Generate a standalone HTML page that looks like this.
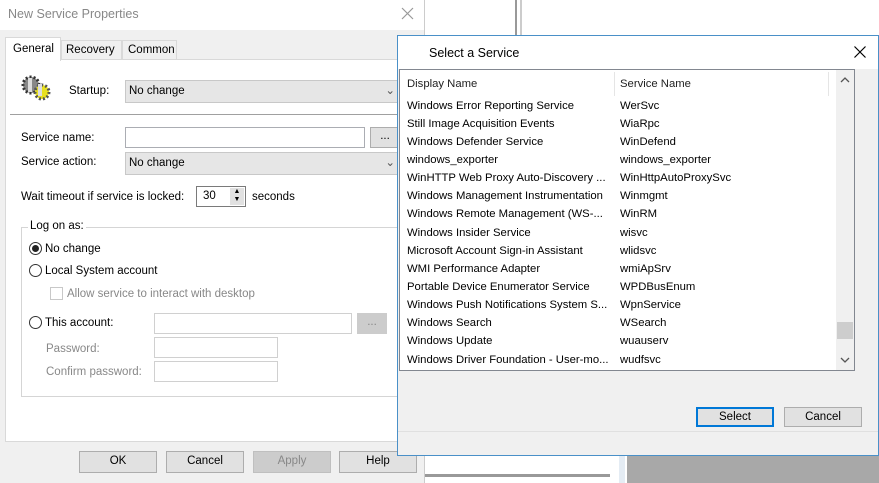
<!DOCTYPE html><html><head><style>
*{box-sizing:border-box}body{margin:0;width:879px;height:483px;overflow:hidden;background:#fff;font-family:"Liberation Sans",sans-serif;font-size:11.5px;color:#000;position:relative}
.a{position:absolute}
.btn{position:absolute;background:#e1e1e1;border:1px solid #adadad;text-align:center;line-height:18px}
.in{position:absolute;background:#fff;border:1px solid #abadb3}
.cb{position:absolute;background:#e6e6e6;border:1px solid #c8c8c8;padding-left:3px;line-height:20px}
.row{position:absolute;left:7px;height:18px;line-height:18px;white-space:nowrap;font-size:11.3px}
.row span{position:absolute;left:213px}
.rad{position:absolute;width:13px;height:13px;border:1px solid #333;border-radius:50%;background:#fff}
.g{color:#888}
</style></head><body>
<div class="a" style="left:515px;top:0;width:2px;height:36px;background:#999"></div>
<div class="a" style="left:520px;top:0;width:2px;height:36px;background:#ccc"></div>
<div class="a" style="left:627px;top:455px;width:252px;height:28px;background:#a8a8a8"></div>
<div class="a" style="left:425px;top:455px;width:200px;height:28px;background:#fff;border-right:6px solid #e4ecf4"></div>
<div class="a" style="left:425px;top:474px;width:185px;height:3px;background:#999"></div>

<div class="a" style="left:0;top:0;width:425px;height:483px;background:#f0f0f0;border-right:1px solid #ccc">
<div class="a" style="left:0;top:0;width:424px;height:30px;background:#fff"></div>
<div class="a" style="left:8px;top:7px;font-size:12.5px;color:#888">New Service Properties</div>
<svg class="a" style="left:401px;top:7px" width="13" height="13"><path d="M1 1L12 12M12 1L1 12" stroke="#999" stroke-width="1.2"/></svg>
<div class="a" style="left:5px;top:59px;width:417px;height:383px;background:#fff;border:1px solid #d9d9d9"></div>
<div class="a" style="left:5px;top:37px;width:56px;height:24px;background:#fff;border:1px solid #d9d9d9;border-bottom:none;padding:5px 0 0 7px">General</div>
<div class="a" style="left:61px;top:40px;width:61px;height:20px;border:1px solid #d9d9d9;border-bottom:none;padding:3px 0 0 4px">Recovery</div>
<div class="a" style="left:122px;top:40px;width:55px;height:20px;border:1px solid #d9d9d9;border-bottom:none;padding:3px 0 0 5px">Common</div>
<svg class="a" style="left:20px;top:74px" width="36" height="30"><circle cx="11" cy="11" r="8" fill="#888" stroke="#333" stroke-dasharray="2 2" stroke-width="3"/><circle cx="22" cy="18" r="7" fill="#e8e020" stroke="#555" stroke-dasharray="2 2" stroke-width="3"/><rect x="8" y="4" width="4" height="14" fill="#ddd"/><rect x="18" y="10" width="4" height="12" fill="#ddd"/></svg>
<div class="a" style="left:69px;top:85px">Startup:</div>
<div class="cb" style="left:125px;top:80px;width:275px;height:23px">No change<span style="position:absolute;right:4px;color:#555">⌄</span></div>
<div class="a" style="left:10px;top:114px;width:410px;height:1px;background:#a0a0a0"></div>
<div class="a" style="left:21px;top:132px">Service name:</div>
<div class="in" style="left:125px;top:127px;width:240px;height:21px"></div>
<div class="btn" style="left:370px;top:127px;width:30px;height:21px;line-height:16px">...</div>
<div class="a" style="left:21px;top:156px">Service action:</div>
<div class="cb" style="left:125px;top:152px;width:275px;height:23px">No change<span style="position:absolute;right:4px;color:#555">⌄</span></div>
<div class="a" style="left:21px;top:191px">Wait timeout if service is locked:</div>
<div class="in" style="left:196px;top:186px;width:50px;height:21px;border-color:#7a7a7a;padding:3px 0 0 6px">30<div class="a" style="right:1px;top:1px;width:14px;height:17px;background:#e1e1e1;font-size:7px;line-height:8px;text-align:center">▲<br>▼</div></div>
<div class="a" style="left:252px;top:191px">seconds</div>
<div class="a" style="left:21px;top:227px;width:398px;height:170px;border:1px solid #d5d5d5"></div>
<div class="a" style="left:28px;top:220px;background:#fff;padding:0 2px">Log on as:</div>
<div class="rad" style="left:29px;top:242px"><div class="a" style="left:2px;top:2px;width:7px;height:7px;border-radius:50%;background:#222"></div></div>
<div class="a" style="left:45px;top:243px">No change</div>
<div class="rad" style="left:29px;top:264px"></div>
<div class="a" style="left:45px;top:265px">Local System account</div>
<div class="a" style="left:50px;top:287px;width:13px;height:13px;border:1px solid #c8c8c8"></div>
<div class="a g" style="left:67px;top:288px">Allow service to interact with desktop</div>
<div class="rad" style="left:29px;top:316px"></div>
<div class="a" style="left:45px;top:317px">This account:</div>
<div class="in" style="left:154px;top:313px;width:198px;height:21px;border-color:#d0d0d0"></div>
<div class="btn" style="left:357px;top:313px;width:30px;height:21px;background:#ccc;border-color:#ccc;color:#888;line-height:16px">...</div>
<div class="a g" style="left:46px;top:343px">Password:</div>
<div class="in" style="left:154px;top:337px;width:124px;height:21px;border-color:#d0d0d0"></div>
<div class="a g" style="left:46px;top:366px">Confirm password:</div>
<div class="in" style="left:154px;top:361px;width:124px;height:21px;border-color:#d0d0d0"></div>
<div class="btn" style="left:79px;top:451px;width:78px;height:22px">OK</div>
<div class="btn" style="left:166px;top:451px;width:78px;height:22px">Cancel</div>
<div class="btn" style="left:253px;top:451px;width:78px;height:22px;background:#ccc;border-color:#bfbfbf;color:#888">Apply</div>
<div class="btn" style="left:339px;top:451px;width:78px;height:22px">Help</div>
</div>

<div class="a" style="left:397px;top:35px;width:482px;height:421px;background:#f0f0f0;border:1px solid #4a90c8">
<div class="a" style="left:0;top:0;width:480px;height:33px;background:#fff"></div>
<div class="a" style="left:31px;top:10px;font-size:12.5px">Select a Service</div>
<svg class="a" style="left:456px;top:10px" width="12" height="12"><path d="M0.5 0.5L11.5 11.5M11.5 0.5L0.5 11.5" stroke="#000" stroke-width="1.2"/></svg>
<div class="a" style="left:1px;top:33px;width:456px;height:302px;background:#fff;border:1px solid #828790;overflow:hidden">
<div class="row" style="top:5px;color:#222">Display Name<span>Service Name</span></div>
<div class="a" style="left:214px;top:2px;width:1px;height:24px;background:#e5e5e5"></div>
<div class="a" style="left:428px;top:2px;width:1px;height:24px;background:#e5e5e5"></div>
<div class="row" style="top:27px">Windows Error Reporting Service<span>WerSvc</span></div>
<div class="row" style="top:45px">Still Image Acquisition Events<span>WiaRpc</span></div>
<div class="row" style="top:63px">Windows Defender Service<span>WinDefend</span></div>
<div class="row" style="top:81px">windows_exporter<span>windows_exporter</span></div>
<div class="row" style="top:99px">WinHTTP Web Proxy Auto-Discovery ...<span>WinHttpAutoProxySvc</span></div>
<div class="row" style="top:117px">Windows Management Instrumentation<span>Winmgmt</span></div>
<div class="row" style="top:135px">Windows Remote Management (WS-...<span>WinRM</span></div>
<div class="row" style="top:154px">Windows Insider Service<span>wisvc</span></div>
<div class="row" style="top:172px">Microsoft Account Sign-in Assistant<span>wlidsvc</span></div>
<div class="row" style="top:190px">WMI Performance Adapter<span>wmiApSrv</span></div>
<div class="row" style="top:208px">Portable Device Enumerator Service<span>WPDBusEnum</span></div>
<div class="row" style="top:226px">Windows Push Notifications System S...<span>WpnService</span></div>
<div class="row" style="top:244px">Windows Search<span>WSearch</span></div>
<div class="row" style="top:262px">Windows Update<span>wuauserv</span></div>
<div class="row" style="top:281px">Windows Driver Foundation - User-mo...<span>wudfsvc</span></div>
<div class="a" style="left:436px;top:0;width:18px;height:300px;background:#f0f0f0">
<svg class="a" style="left:4px;top:7px" width="10" height="6"><path d="M1 5L5 1L9 5" stroke="#555" fill="none" stroke-width="1.3"/></svg>
<div class="a" style="left:1px;top:252px;width:16px;height:17px;background:#cdcdcd"></div>
<svg class="a" style="left:4px;top:287px" width="10" height="6"><path d="M1 1L5 5L9 1" stroke="#555" fill="none" stroke-width="1.3"/></svg></div>
</div>
<div class="btn" style="left:298px;top:371px;width:78px;height:20px;border:2px solid #0078d7;line-height:16px">Select</div>
<div class="btn" style="left:386px;top:371px;width:78px;height:20px;line-height:18px">Cancel</div>
<div class="a" style="left:0;top:395px;width:480px;height:1px;background:#e0e0e0"></div>
</div>
</body></html>
